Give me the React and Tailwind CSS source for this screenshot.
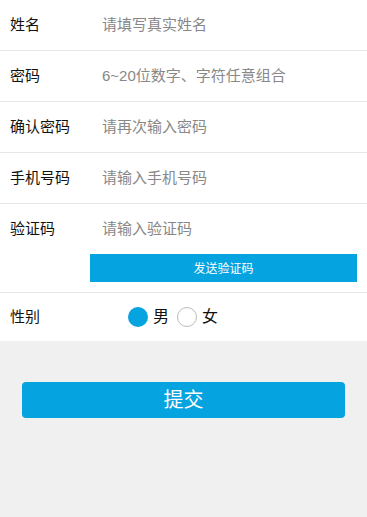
export default function App() {
  const font = { fontFamily: '"Liberation Sans", "Noto Sans CJK SC", sans-serif' };
  const rows = [
    ["姓名", "请填写真实姓名"],
    ["密码", "6~20位数字、字符任意组合"],
    ["确认密码", "请再次输入密码"],
    ["手机号码", "请输入手机号码"],
  ];
  return (
    <div className="w-[367px] h-[517px] bg-[#f0f0f0] flex flex-col" style={font}>
      <div className="bg-white flex flex-col">
        {rows.map(([l, p]) => (
          <div key={l} className="h-[51px] border-b border-[#e6e6e6] flex items-center">
            <div className="w-[102px] pl-[10px] text-[15px] text-[#111]">{l}</div>
            <div className="text-[15px] text-[#888]">{p}</div>
          </div>
        ))}
        <div className="border-b border-[#e6e6e6] flex flex-col pb-[10px]">
          <div className="h-[50px] flex items-center">
            <div className="w-[102px] pl-[10px] text-[15px] text-[#111]">验证码</div>
            <div className="text-[15px] text-[#888]">请输入验证码</div>
          </div>
          <div className="ml-[90px] mr-[10px] h-[28px] bg-[#05a3e0] text-white text-[12px] pt-[2px] flex items-center justify-center">
            发送验证码
          </div>
        </div>
        <div className="h-[48px] flex items-center">
          <div className="w-[128px] pl-[10px] text-[15px] text-[#111]">性别</div>
          <div className="w-[20px] h-[20px] rounded-full bg-[#05a3e0]"></div>
          <div className="ml-[5px] text-[16px] text-[#111]">男</div>
          <div className="ml-[8px] w-[20px] h-[20px] rounded-full border border-[#bbb] bg-white"></div>
          <div className="ml-[5px] text-[16px] text-[#111]">女</div>
        </div>
      </div>
      <div className="px-[22px] pt-[41px]">
        <div className="h-[36px] rounded-[4px] bg-[#05a3e0] text-white text-[20px] flex items-center justify-center">
          提交
        </div>
      </div>
    </div>
  );
}
